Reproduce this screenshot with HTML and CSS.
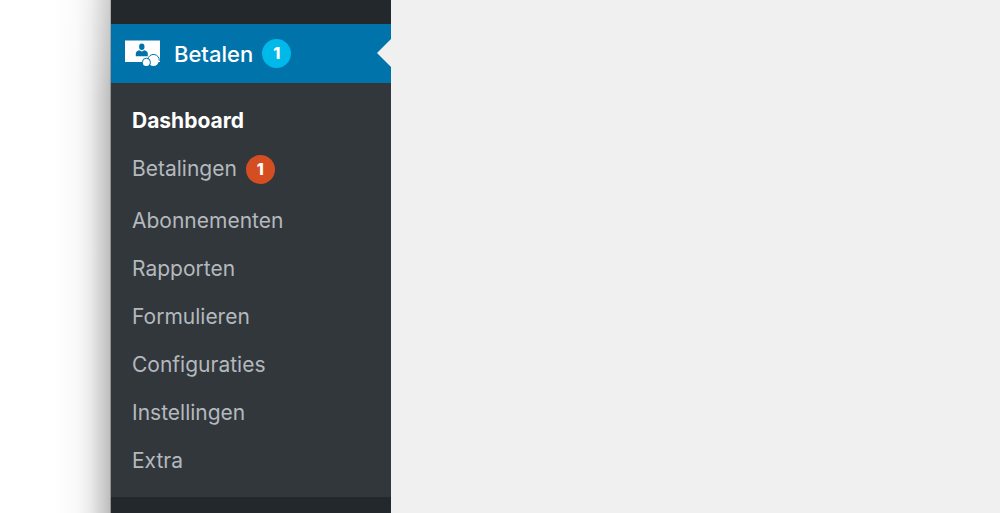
FILE: index.html
```html
<!DOCTYPE html>
<html lang="nl">
<head>
<meta charset="utf-8">
<meta name="viewport" content="width=device-width, initial-scale=1">
<title>Betalen</title>
<link rel="stylesheet" href="styles.css">
</head>
<body>
<div class="window">
  <nav class="sidebar" aria-label="Hoofdmenu">
    <a class="menu-top" href="#betalen">
      <svg class="menu-icon" viewBox="0 0 36 29" aria-hidden="true">
        <path fill="#fff" d="M0 1.500h35v21.500H0z"/>
        <ellipse class="cut" cx="16.800" cy="7.800" rx="2.700" ry="3.200"/>
        <path class="cut" d="M10.800 17.200v-2.500q0-2.600 3.600-3.400 2.400 2.200 4.800 0 3.600.8 3.600 3.400v2.500z"/>
        <circle class="coin" cx="28.500" cy="21.800" r="5.200"/>
        <path class="rim" d="M22.800 20.500a5.700 5.700 0 0 1 11.400 1.300"/>
        <circle class="coin" cx="21.400" cy="23.500" r="3.600"/>
        <path class="rim" d="M17.400 23.200a4 4 0 0 1 8 0 4 4 0 0 1-1.400 3.400"/>
      </svg>
      <span>Betalen</span>
      <span class="badge badge-blue">1</span>
    </a>
    <ul class="submenu">
      <li><a class="item current" href="#dashboard" aria-current="page">Dashboard</a></li>
      <li><a class="item" href="#betalingen">Betalingen <span class="badge badge-orange">1</span></a></li>
      <li><a class="item" href="#abonnementen">Abonnementen</a></li>
      <li><a class="item" href="#rapporten">Rapporten</a></li>
      <li><a class="item" href="#formulieren">Formulieren</a></li>
      <li><a class="item" href="#configuraties">Configuraties</a></li>
      <li><a class="item" href="#instellingen">Instellingen</a></li>
      <li><a class="item" href="#extra">Extra</a></li>
    </ul>
  </nav>
  <main class="content"></main>
</div>
</body>
</html>
```
FILE: styles.css
```css
* {
  box-sizing: border-box;
}

/* The backdrop darkens towards the window's left edge. */
body {
  margin: 0;
  padding-left: 111px;
  background:
    linear-gradient(to bottom, rgba(255, 255, 255, 0.25), transparent 100px),
    linear-gradient(to right, #fff 55px, #f9f9f9 77px, #ebebeb 90px, #d0d0d0 102px, #bebebe 110px, #919191 110px);
  font-family: Inter, "Liberation Sans", sans-serif;
  font-size: 21px;
  line-height: 24px;
}

.window {
  display: flex;
  min-height: 100vh;
}

.sidebar {
  flex: 0 0 280px;
  padding-top: 24px;
  background: #23282d;
}

.content {
  flex: 1;
  background: #f0f0f0;
}

.menu-top {
  position: relative;
  display: flex;
  align-items: center;
  padding: 15px 14px;
  background: #0073aa;
  color: #fff;
  font-size: 22px;
  font-weight: 500;
  text-decoration: none;
}

.menu-top::after {
  content: "";
  position: absolute;
  top: 15px;
  right: 0;
  border: 14px solid transparent;
  border-right-color: #f0f0f0;
  border-left-width: 0;
}

.menu-icon {
  width: 36px;
  height: 29px;
  margin-right: 13px;
}

.cut {
  fill: #0073aa;
}

.coin {
  fill: #fff;
}

.rim {
  fill: none;
  stroke: #0073aa;
  stroke-width: 1;
}

.badge {
  width: 29px;
  height: 29px;
  margin-left: 9px;
  border-radius: 50%;
  color: #fff;
  font-size: 16px;
  font-weight: 800;
  line-height: 29px;
  text-align: center;
}

.badge-blue {
  background: #00b9eb;
}

.badge-orange {
  margin-top: -2px;
  margin-bottom: 1px;
  background: #d54e21;
}

.submenu {
  margin: 0;
  padding: 14px 0 12px;
  background: #32373c;
  list-style: none;
}

.item {
  display: flex;
  align-items: flex-start;
  padding: 12px 21px;
  color: #b4b9be;
  text-decoration: none;
}

.current {
  color: #fff;
  font-weight: 700;
}
```
